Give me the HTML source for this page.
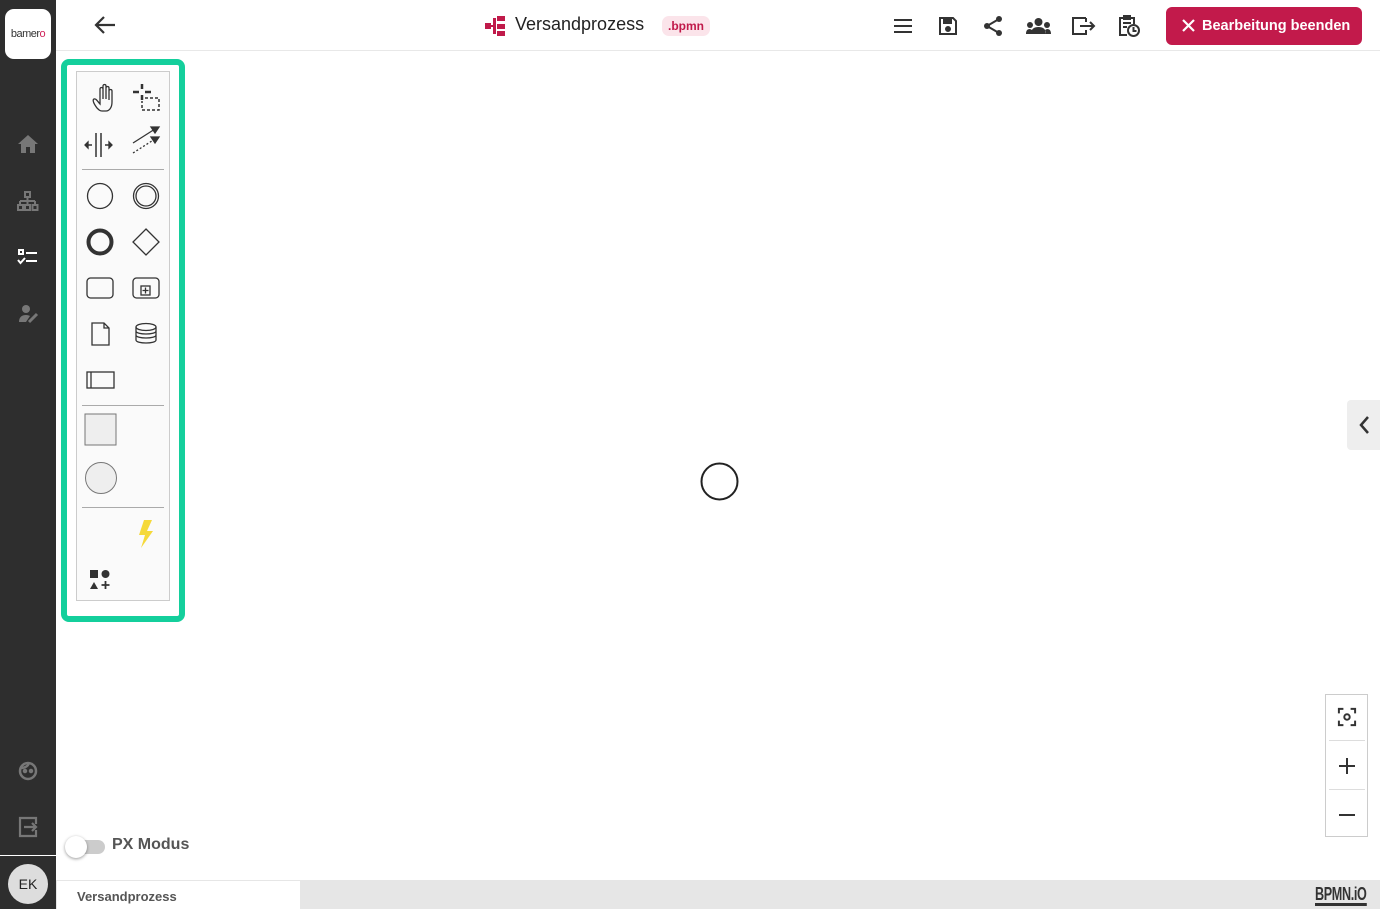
<!DOCTYPE html>
<html><head><meta charset="utf-8"><style>
*{margin:0;padding:0;box-sizing:border-box}
body{width:1380px;height:909px;position:relative;overflow:hidden;background:#fff;font-family:"Liberation Sans",sans-serif}
.abs{position:absolute}
#side{left:0;top:0;width:56px;height:909px;background:#2e2e2e}
svg{position:absolute;overflow:visible}
</style></head><body>
<div id="side" class="abs">
  <div class="abs" style="left:5px;top:9px;width:46px;height:50px;background:#fff;border-radius:9px;font-size:11px;color:#333;text-align:center;line-height:50px;letter-spacing:-0.5px">bamer<span style="color:#d0245a">o</span></div>
  <svg style="left:17px;top:134px" width="22" height="20" viewBox="0 0 22 20"><path d="M11 1 L1 10 H4 V19 H9 V13 H13 V19 H18 V10 H21Z" fill="#777"/></svg>
  <svg style="left:17px;top:191px" width="22" height="22" viewBox="0 0 22 22" fill="none" stroke="#777" stroke-width="2"><rect x="8" y="1" width="5" height="5"/><path d="M10.5 6v4M3 10h15M3 10v4M10.5 10v4M18 10v4"/><rect x="1" y="14" width="5" height="5"/><rect x="8" y="14" width="5" height="5"/><rect x="15.5" y="14" width="5" height="5"/></svg>
  <svg style="left:17px;top:249px" width="22" height="16" viewBox="0 0 22 16" fill="none" stroke="#fff" stroke-width="2"><rect x="2" y="1" width="4" height="4"/><path d="M9 4h11M9 12h11M1 11l2.5 3L8 9"/></svg>
  <svg style="left:18px;top:304px" width="22" height="20" viewBox="0 0 22 20"><circle cx="8" cy="5" r="4" fill="#777"/><path d="M1 18c0-5 3-7 7-7 2 0 3 .5 4 1l-4 6z" fill="#777"/><path d="M11 18l8-8" stroke="#777" stroke-width="3"/></svg>
  <svg style="left:17px;top:760px" width="22" height="22" viewBox="0 0 22 22" fill="none" stroke="#777" stroke-width="2.5"><circle cx="11" cy="11" r="8"/><circle cx="8" cy="11" r="1" fill="#777"/><circle cx="14" cy="11" r="1" fill="#777"/><path d="M4 8c4 0 7-2 8-5"/></svg>
  <svg style="left:18px;top:817px" width="22" height="20" viewBox="0 0 22 20" fill="none" stroke="#777" stroke-width="2.2"><path d="M14 1H2v18h16v-6M18 7V1H14M6 10h12M14 6l4 4-4 4"/></svg>
  <div class="abs" style="left:0;top:855px;width:56px;height:1px;background:#fff"></div>
  <div class="abs" style="left:8px;top:864px;width:40px;height:40px;border-radius:50%;background:#ddd;color:#222;font-size:14px;text-align:center;line-height:40px">EK</div>
</div>
<div class="abs" style="left:56px;top:50px;width:1324px;height:1px;background:#e8e8e8"></div>
<svg style="left:94px;top:15px" width="22" height="20" viewBox="0 0 22 20" fill="none" stroke="#333" stroke-width="2.2"><path d="M21 10H2M10 2L2 10l8 8"/></svg>
<svg style="left:485px;top:15px" width="21" height="22" viewBox="0 0 21 22" fill="#c01a4a"><rect x="0" y="8" width="6" height="6"/><rect x="12" y="1" width="8" height="5"/><rect x="12" y="9" width="8" height="5"/><rect x="12" y="16" width="8" height="5"/><rect x="8" y="3" width="3" height="16"/><rect x="6" y="10" width="4" height="2"/></svg>
<div class="abs" style="left:515px;top:14px;font-size:18px;color:#222">Versandprozess</div>
<div class="abs" style="left:662px;top:16px;width:48px;height:20px;border-radius:7px;background:#fbe4ea;color:#c01a4a;font-size:12px;font-weight:bold;text-align:center;line-height:20px">.bpmn</div>
<svg style="left:893px;top:18px" width="20" height="16" viewBox="0 0 20 16" stroke="#333" stroke-width="2"><path d="M1 2h18M1 8h18M1 14h18"/></svg>
<svg style="left:938px;top:16px" width="20" height="20" viewBox="0 0 20 20" fill="none" stroke="#333" stroke-width="2"><path d="M2 2h13l3 3v13H2z"/><rect x="6" y="3" width="7" height="4" fill="#333"/><circle cx="10" cy="13" r="2" fill="#333"/></svg>
<svg style="left:983px;top:15px" width="20" height="22" viewBox="0 0 20 22" fill="#333"><circle cx="16" cy="4" r="3"/><circle cx="4" cy="11" r="3"/><circle cx="16" cy="18" r="3"/><path d="M16 4L4 11l12 7" fill="none" stroke="#333" stroke-width="2"/></svg>
<svg style="left:1026px;top:17px" width="25" height="18" viewBox="0 0 25 18" fill="#333"><circle cx="12.5" cy="5" r="4"/><circle cx="4" cy="8" r="3"/><circle cx="21" cy="8" r="3"/><path d="M5 17c0-5 3-7 7.5-7s7.5 2 7.5 7zM0 17c0-3 1-5 4-5l2 1-1 4zM25 17c0-3-1-5-4-5l-2 1 1 4z"/></svg>
<svg style="left:1072px;top:17px" width="24" height="18" viewBox="0 0 24 18" fill="none" stroke="#333" stroke-width="2"><path d="M14 1H1v16h13v-4M14 5V1M8 9h14M18 5l4 4-4 4"/></svg>
<svg style="left:1118px;top:14px" width="22" height="24" viewBox="0 0 22 24" fill="none" stroke="#333" stroke-width="2"><path d="M9 21H2V4h14v6"/><rect x="6" y="2" width="6" height="3" fill="#333"/><path d="M5 9h8M5 13h4"/><circle cx="15.5" cy="16.5" r="5.5"/><path d="M15.5 13v4h3"/></svg>
<div class="abs" style="left:1166px;top:7px;width:196px;height:38px;background:#c21a4b;border-radius:6px;color:#fff;font-size:14.5px;font-weight:bold;line-height:38px;padding-left:36px">Bearbeitung beenden</div>
<svg style="left:1182px;top:19px" width="13" height="13" viewBox="0 0 13 13" stroke="#fff" stroke-width="2.2"><path d="M1 1l11 11M12 1L1 12"/></svg>

<div class="abs" style="left:61px;top:59px;width:124px;height:563px;border:6px solid #14cf9c;border-radius:8px"></div>
<div class="abs" style="left:76px;top:71px;width:94px;height:530px;background:#fafafa;border:1px solid #ccc"></div>
<div class="abs" style="left:82px;top:169px;width:82px;height:1px;background:#aaa"></div>
<div class="abs" style="left:82px;top:405px;width:82px;height:1px;background:#aaa"></div>
<div class="abs" style="left:82px;top:507px;width:82px;height:1px;background:#aaa"></div>
<svg style="left:76px;top:71px" width="94" height="530" viewBox="0 0 94 530" fill="none" stroke="#333" stroke-width="1.3">
<g transform="translate(4,9)"><path d="M17 28c-3-4-5-8-3-9s4 3 6 5V9c0-2 3-2 3 0v10V6c0-2 3-2 3 0v13V8c0-2 3-2 3 0v12V11c0-2 3-2 3 0v11c0 6-3 9-6 9h-4c-2 0-3-1-5-3z"/></g>
<path d="M57 21h6M69 21h6M66 13v5M66 24v5" stroke-width="2.5"/>
<path d="M69 27h14v12H66v-9" stroke-width="1.5" stroke-dasharray="3 2"/>
<g transform="translate(4,4)"><path d="M16 58v24M21 58v24" stroke-width="1.5"/><path d="M12 70H8M25 70h5" stroke-width="1.5"/><path d="M8 67l-3 3 3 3zM29 67l3 3-3 3z" fill="#333"/></g>
<path d="M57 82l22-14" stroke-dasharray="2 2"/><path d="M57 72l22-14" /><path d="M83 56l-8 0 4 6zM83 66l-8 0 4 6z" fill="#333"/>
<circle cx="24" cy="125" r="12.5"/><circle cx="70" cy="125" r="12.5"/><circle cx="70" cy="125" r="10"/>
<circle cx="24" cy="171" r="11.5" stroke-width="4"/><path d="M70 158l13 13-13 13-13-13z"/>
<rect x="11" y="207" width="26" height="20" rx="3.5"/><rect x="57" y="207" width="26" height="20" rx="3.5"/><rect x="65" y="215" width="9" height="9"/><path d="M69.5 216.5v6M66.5 219.5h6"/>
<path d="M16 252h12l5 5v17H16z M28 252v5h5"/>
<ellipse cx="70" cy="256" rx="10" ry="3.5"/><path d="M60 256v13c0 4 20 4 20 0v-13M60 260c0 4 20 4 20 0M60 264c0 4 20 4 20 0"/>
<rect x="11" y="301" width="27" height="16"/><path d="M15 301v16"/>
<rect x="9" y="343" width="31" height="31" fill="#eee" stroke="#777" stroke-width="1"/>
<circle cx="25" cy="407" r="15.5" fill="#eee" stroke="#777" stroke-width="1"/>
</svg>
<svg style="left:137px;top:520px" width="18" height="28" viewBox="0 0 18 28"><path d="M7 0h8L10 11h6L4 28l4-13H2z" fill="#f5d93a"/></svg>
<svg style="left:89px;top:569px" width="22" height="22" viewBox="0 0 22 22" fill="#333"><rect x="1" y="1" width="8" height="8"/><circle cx="16.5" cy="5" r="4"/><path d="M1 20l4-7 4 7z"/><path d="M16.5 12v8M12.5 16h8" stroke="#333" stroke-width="1.8"/></svg>

<svg style="left:700px;top:462px" width="40" height="40" viewBox="0 0 40 40"><circle cx="19.5" cy="19.5" r="18" fill="none" stroke="#222" stroke-width="2"/></svg>

<div class="abs" style="left:1347px;top:400px;width:33px;height:50px;background:#eee;border-radius:4px 0 0 4px"></div>
<svg style="left:1359px;top:416px" width="10" height="18" viewBox="0 0 10 18" fill="none" stroke="#333" stroke-width="2.5"><path d="M9 1L2 9l7 8"/></svg>

<div class="abs" style="left:1325px;top:694px;width:43px;height:143px;border:1px solid #ccc;background:#fff"></div>
<div class="abs" style="left:1329px;top:740px;width:36px;height:1px;background:#ddd"></div>
<div class="abs" style="left:1329px;top:789px;width:36px;height:1px;background:#ddd"></div>
<svg style="left:1338px;top:708px" width="18" height="18" viewBox="0 0 20 20" fill="none" stroke="#333" stroke-width="2.2"><path d="M1 6V1h5M14 1h5v5M19 14v5h-5M6 19H1v-5"/><circle cx="10" cy="10" r="3"/></svg>
<svg style="left:1339px;top:758px" width="16" height="16" viewBox="0 0 16 16" stroke="#333" stroke-width="2"><path d="M8 0v16M0 8h16"/></svg>
<svg style="left:1339px;top:814px" width="16" height="2" viewBox="0 0 16 2" stroke="#333" stroke-width="2"><path d="M0 1h16"/></svg>

<div class="abs" style="left:67px;top:840px;width:38px;height:14px;border-radius:7px;background:#ccc"></div>
<div class="abs" style="left:65px;top:836px;width:22px;height:22px;border-radius:50%;background:#fff;box-shadow:0 1px 3px rgba(0,0,0,.4)"></div>
<div class="abs" style="left:112px;top:836px;font-size:16px;font-weight:bold;color:#555">PX Modus</div>

<div class="abs" style="left:56px;top:880px;width:1324px;height:29px;background:#e6e6e6"></div>
<div class="abs" style="left:57px;top:881px;width:243px;height:28px;background:#fff;font-size:13px;font-weight:bold;color:#555;padding:8px 0 0 20px">Versandprozess</div>
<div class="abs" style="left:1315px;top:885px;font-size:18px;font-weight:bold;color:#333;transform:scaleX(.7);transform-origin:left;letter-spacing:-0.5px;border-bottom:3px solid #333;line-height:18px">BPMN.iO</div>
</body></html>
